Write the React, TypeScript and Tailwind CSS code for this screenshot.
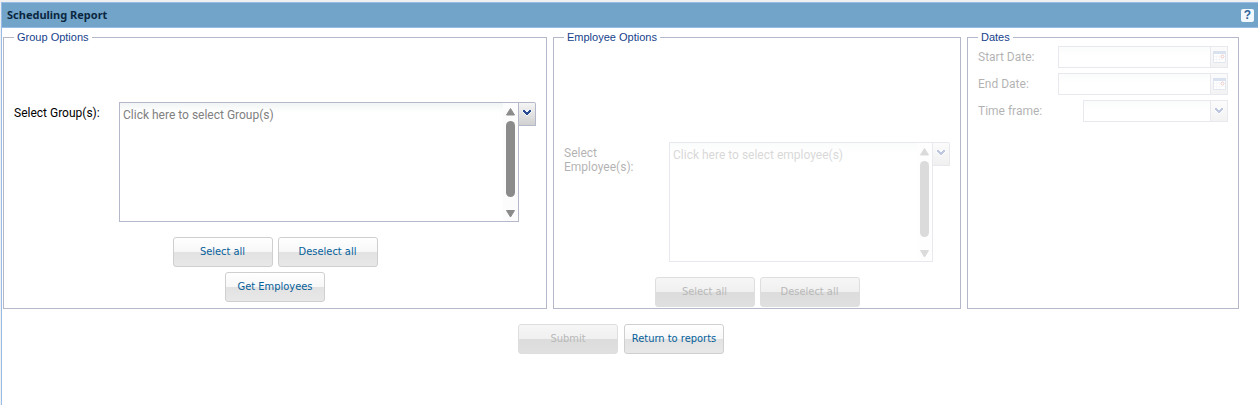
import type { ReactNode } from "react";
import clsx from "clsx";

/* -------------------- Icons -------------------- */
const ChevronIcon = () => (
  <svg width="10" height="6" viewBox="0 0 10 6" shapeRendering="crispEdges" aria-hidden="true">
    <path d="M0 0h10v2H9v1H8v1H7v1H6v1H4V5H3V4H2V3H1V2H0z" fill="#f4f7fc" />
    <path d="M1 0h2v1h1v1h2V1h1V0h2v2H8v1H7v1H6v1H4V4H3V3H2V2H1z" fill="#2a4a94" />
  </svg>
);

const CalendarIcon = () => (
  <svg width="13" height="12" viewBox="0 0 13 12" aria-hidden="true">
    <path d="M0.5 0.5h12v11h-12z" fill="#ffffff" stroke="#9fb2cc" />
    <path d="M0 0h13v3H0z" fill="#86a3cc" />
    <path d="M3.5 4v7M6.5 4v7M1 5.5h6M1 8.5h11" stroke="#e8e8f0" fill="none" />
    <circle cx="9.5" cy="5.5" r="1.5" fill="#ffffff" stroke="#c0504a" />
  </svg>
);

const ScrollBar = () => (
  <svg
    width="15"
    height="118"
    viewBox="0 0 15 118"
    className="shrink-0 bg-[#fcfcfc]"
    aria-hidden="true"
  >
    <path d="M7.5 5.5L11.5 12H3.5z" fill="#8b8b8b" stroke="#8b8b8b" strokeLinejoin="round" />
    <rect x="3" y="18" width="9" height="76" rx="4.5" fill="#8b8b8b" />
    <path d="M7.5 114L11.5 107.5H3.5z" fill="#8b8b8b" stroke="#8b8b8b" strokeLinejoin="round" />
  </svg>
);

/* -------------------- Form parts -------------------- */
interface ActionButtonProps {
  children: ReactNode;
  disabled?: boolean;
}

const ActionButton = ({ children, disabled }: ActionButtonProps) => (
  <button
    type="button"
    disabled={disabled}
    className={clsx(
      "h-[30px] w-[100px] whitespace-nowrap rounded-[3px] border pt-px font-['DejaVu_Sans_Condensed',Tahoma,sans-serif] text-[11px]",
      disabled
        ? "border-[#dedede] bg-[linear-gradient(#f6f6f6,#f0f0f0_50%,#dcdcdc_50%,#e0e0e0)] text-[#b8b8b8]"
        : "border-[#cfcfcf] bg-[linear-gradient(#ffffff,#f7f7f7_50%,#e2e2e2_50%,#e8e8e8)] text-[#04609a]"
    )}
  >
    {children}
  </button>
);

interface PanelProps {
  title: string;
  children: ReactNode;
}

const Panel = ({ title, children }: PanelProps) => (
  <fieldset className="min-w-0 border border-[#b5b8c8] px-[10px]">
    <legend className="px-[3px] font-['Liberation_Sans',Arial,sans-serif] text-[11px] leading-[13px] text-[#15428b]">
      {title}
    </legend>
    {children}
  </fieldset>
);

interface PickerProps {
  id: string;
  label: string;
  placeholder: string;
  disabled?: boolean;
}

const Picker = ({ id, label, placeholder, disabled }: PickerProps) => (
  <div className={clsx("flex items-start", disabled && "opacity-30")}>
    <label htmlFor={id} className="w-[105px] shrink-0 pr-3 pt-[4px] leading-[14px]">
      {label}
    </label>
    <div className="flex h-[120px] min-w-0 flex-1 border border-[#b5b8c8]">
      <textarea
        id={id}
        placeholder={placeholder}
        disabled={disabled}
        className="min-w-0 flex-1 resize-none overflow-hidden bg-[linear-gradient(#f2f5f5,#ffffff_10px)] px-[3px] py-[4px] leading-4 outline-none placeholder:text-[#808080]"
      />
      <ScrollBar />
    </div>
    <button
      type="button"
      aria-label={`Open ${label}`}
      disabled={disabled}
      className="flex h-6 w-[17px] shrink-0 justify-center rounded-tr-[2px] border border-l-0 border-[#b5b8c8] bg-[linear-gradient(#f5f5f5,#d0d0d0)] pt-[7px]"
    >
      <ChevronIcon />
    </button>
  </div>
);

interface FieldRowProps {
  id: string;
  label: string;
  action: string;
  icon: ReactNode;
  children: ReactNode;
  inset?: boolean;
}

const FieldRow = ({ id, label, action, icon, children, inset }: FieldRowProps) => (
  <div className="flex h-[22px] items-center opacity-30">
    <label htmlFor={id} className={clsx("shrink-0", inset ? "w-[105px]" : "w-20")}>
      {label}
    </label>
    <div className="flex h-full min-w-0 flex-1 border border-[#b5b8c8] bg-[linear-gradient(#f2f5f5,#ffffff_8px)]">
      {children}
      <button
        type="button"
        aria-label={action}
        disabled
        className="flex w-[17px] shrink-0 items-center justify-center border-l border-[#b5b8c8] bg-[linear-gradient(#f5f5f5,#d8d8d8)]"
      >
        {icon}
      </button>
    </div>
  </div>
);

const App = () => {
  return (
    <div className="min-h-screen bg-[#f0f0f0] pl-px pt-[2px] font-[Roboto,Tahoma,sans-serif] text-[12px] text-black">
      <div className="min-h-[calc(100vh-2px)] border-l border-t border-[#99bbe8] bg-white">
        <header className="flex h-[25px] items-center justify-between border-b border-[#99bbe8] bg-[#72a4ca] pl-[5px] pr-[4px]">
          <h1 className="font-['Noto_Sans',Tahoma,sans-serif] text-[11px] font-bold text-[#0b2740]">
            Scheduling Report
          </h1>
          <button
            type="button"
            aria-label="Help"
            className="flex size-[13px] items-center justify-center rounded-[2px] bg-[#f2f8ff] font-['Liberation_Sans',Arial,sans-serif] text-[12px] font-bold leading-none text-[#2d6399]"
          >
            ?
          </button>
        </header>

        <form className="pl-px pr-[19px] pt-[3px]">
          <div className="grid grid-cols-[4fr_3fr_2fr] gap-[6px]">
            <Panel title="Group Options">
              <div className="pb-[6px] pt-[58px]">
                <Picker
                  id="groups"
                  label="Select Group(s):"
                  placeholder="Click here to select Group(s)"
                />
                <div className="mt-[15px] flex justify-center gap-[5px]">
                  <ActionButton>Select all</ActionButton>
                  <ActionButton>Deselect all</ActionButton>
                </div>
                <div className="mt-[5px] flex justify-center">
                  <ActionButton>Get Employees</ActionButton>
                </div>
              </div>
            </Panel>

            <Panel title="Employee Options">
              <div className="pt-[98px]">
                <Picker
                  id="employees"
                  label="Select Employee(s):"
                  placeholder="Click here to select employee(s)"
                  disabled
                />
                <div className="mt-[15px] flex justify-center gap-[5px]">
                  <ActionButton disabled>Select all</ActionButton>
                  <ActionButton disabled>Deselect all</ActionButton>
                </div>
              </div>
            </Panel>

            <Panel title="Dates">
              <div className="flex flex-col gap-[5px] pt-[2px]">
                <FieldRow
                  id="start-date"
                  label="Start Date:"
                  action="Pick start date"
                  icon={<CalendarIcon />}
                >
                  <input id="start-date" type="text" disabled className="min-w-0 flex-1 px-[3px]" />
                </FieldRow>
                <FieldRow
                  id="end-date"
                  label="End Date:"
                  action="Pick end date"
                  icon={<CalendarIcon />}
                >
                  <input id="end-date" type="text" disabled className="min-w-0 flex-1 px-[3px]" />
                </FieldRow>
                <FieldRow
                  id="time-frame"
                  label="Time frame:"
                  action="Open time frames"
                  icon={<ChevronIcon />}
                  inset
                >
                  <select
                    id="time-frame"
                    disabled
                    className="min-w-0 flex-1 appearance-none px-[3px]"
                  >
                    <option value=""></option>
                  </select>
                </FieldRow>
              </div>
            </Panel>
          </div>

          <div className="mt-[15px] flex justify-center gap-[6px]">
            <ActionButton disabled>Submit</ActionButton>
            <ActionButton>Return to reports</ActionButton>
          </div>
        </form>
      </div>
    </div>
  );
};

export default App;
